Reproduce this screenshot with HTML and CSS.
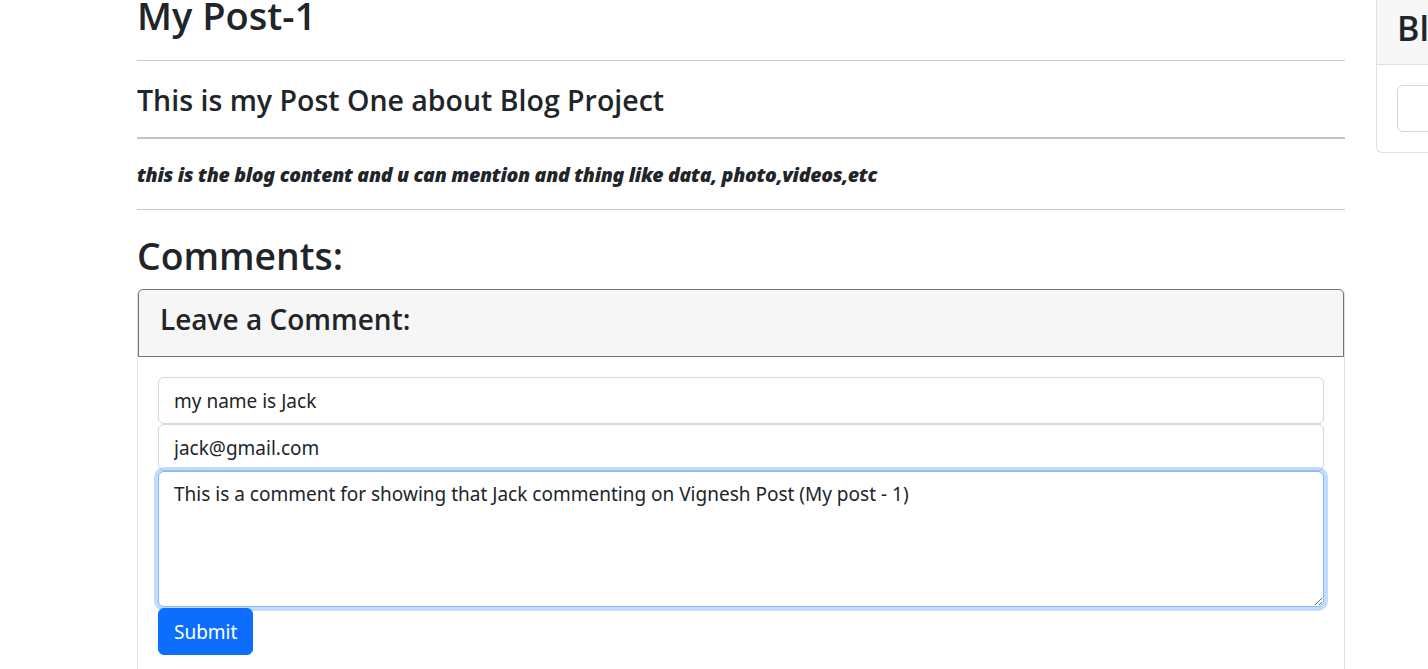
FILE: index.html
```html
<!DOCTYPE html>
<html lang="en">
<head>
<meta charset="utf-8">
<title>My Post-1</title>
<link rel="stylesheet" href="styles.css">
</head>
<body>
<div class="page">
  <main class="main">
    <h1 class="post-title">My Post-1</h1>
    <hr class="rule">
    <h3 class="post-subtitle">This is my Post One about Blog Project</h3>
    <hr class="rule rule-thick">
    <h5 class="post-content"><em><b>this is the blog content and u can mention and thing like data, photo,videos,etc</b></em></h5>
    <hr class="rule">
    <h1 class="comments-title">Comments:</h1>
    <div class="card">
      <div class="card-header">
        <h3 class="card-title">Leave a Comment:</h3>
      </div>
      <form class="card-body">
        <input class="field" type="text" value="my name is Jack">
        <input class="field" type="email" value="jack@gmail.com">
        <textarea class="field field-area">This is a comment for showing that Jack commenting on Vignesh Post (My post - 1)</textarea>
        <button class="btn" type="button">Submit</button>
      </form>
    </div>
  </main>
  <aside class="sidebar">
    <div class="side-card">
      <div class="side-header"><h2 class="side-title">Blog Search</h2></div>
      <div class="side-body">
        <input class="side-field" type="text">
      </div>
    </div>
  </aside>
</div>
</body>
</html>
```
FILE: styles.css
```css
* { box-sizing: border-box; }
html, body { margin: 0; padding: 0; }
body {
  font-family: "Noto Sans", "Open Sans", sans-serif;
  color: #212529;
  background: #fff;
  overflow: hidden;
  width: 1428px;
  height: 669px;
}
.page {
  display: flex;
  gap: 31px;
  padding-left: 137px;
  align-items: flex-start;
}
.main {
  width: 1208px;
  flex-shrink: 0;
}
.post-title,
.post-subtitle,
.comments-title,
.card-title,
.side-title {
  font-family: "Open Sans", "Noto Sans", sans-serif;
  font-weight: 600;
}
.post-title {
  font-size: 38px;
  line-height: 48px;
  margin: -9px 0 0;
}
.rule {
  border: 0;
  border-top: 1px solid #c9c9c9;
  margin: 0;
}
.rule-thick { border-top-width: 2px; border-top-color: #c4c4c4; }
.main > .rule:first-of-type { margin-top: 21px; }
.post-subtitle {
  font-size: 28.5px;
  line-height: 34px;
  margin: 22px 0 20px;
}
.post-content {
  font-size: 19.5px;
  font-weight: 700;
  line-height: 24px;
  letter-spacing: -0.3px;
  margin: 24px 0 22px;
}
.comments-title {
  font-size: 37.3px;
  line-height: 48px;
  margin: 22px 0 9px;
}
.card {
  border: 1px solid #dfdfdf;
  border-top: 0;
  border-radius: 6px 6px 0 0;
  height: 400px;
}
.card-header {
  background: #f6f6f6;
  border: 1px solid #6c757d;
  border-radius: 5px 5px 0 0;
  padding: 13px 21px 20px;
}
.card-title {
  font-size: 28px;
  line-height: 33px;
  margin: 0;
}
.card-body {
  display: flex;
  flex-direction: column;
  align-items: flex-start;
  padding: 20px 20px 0;
}
.field {
  display: block;
  width: 100%;
  font-family: inherit;
  font-size: 19px;
  line-height: 30px;
  color: #212529;
  padding: 7px 15px;
  border: 1px solid #d3d6da;
  border-radius: 6px;
  background: #fff;
  height: 47px;
  outline: none;
}
.field-area {
  height: 136px;
  resize: vertical;
  border-color: #86b7fe;
  box-shadow: 0 0 0 4px rgba(13,110,253,0.25);
  position: relative;
}
.btn {
  margin-top: 1px;
  background: #0d6efd;
  color: #fff;
  border: 1px solid #0d6efd;
  border-radius: 6px;
  font-family: inherit;
  font-size: 19px;
  line-height: 30px;
  padding: 7px 15px;
  height: 47px;
  width: 95px;
  cursor: pointer;
}
.sidebar {
  width: 320px;
  flex-shrink: 0;
}
.side-card {
  border: 1px solid #dfdfdf;
  border-top: 0;
  border-radius: 0 0 6px 6px;
}
.side-header {
  background: #f7f7f7;
  border-bottom: 1px solid #dfdfdf;
  height: 65px;
  padding: 8px 20px 0;
}
.side-title {
  font-size: 34px;
  line-height: 40px;
  margin: 0;
}
.side-body {
  padding: 20px 20px 20px;
}
.side-field {
  display: block;
  width: 100%;
  height: 47px;
  border: 1px solid #d3d6da;
  border-radius: 6px;
  background: #fff;
}
```
